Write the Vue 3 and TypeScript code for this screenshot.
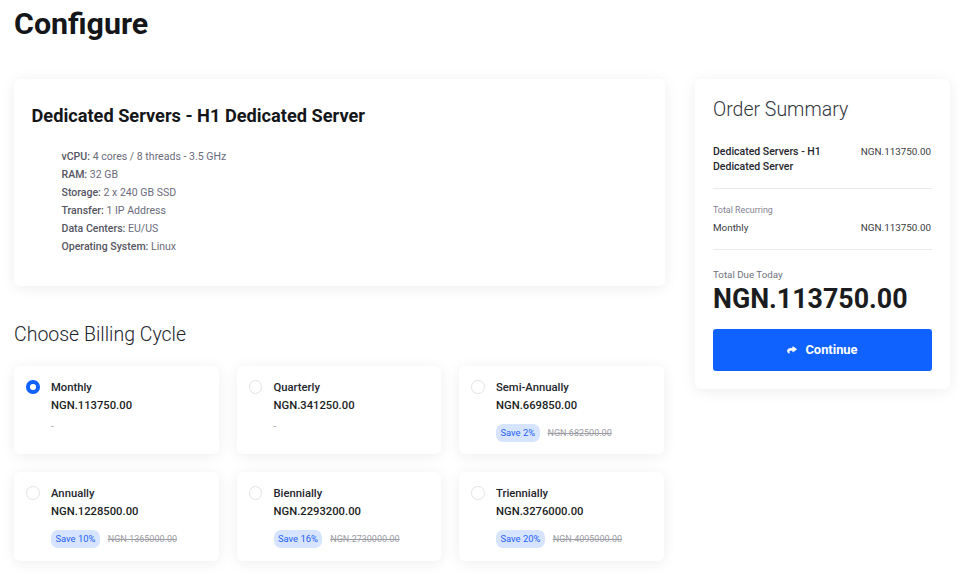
<script setup lang="ts">
import { ref } from 'vue';

interface Cycle {
  name: string;
  price: string;
  save?: string;
  was?: string;
}

const specs = [
  ['vCPU:', '4 cores / 8 threads - 3.5 GHz'],
  ['RAM:', '32 GB'],
  ['Storage:', '2 x 240 GB SSD'],
  ['Transfer:', '1 IP Address'],
  ['Data Centers:', 'EU/US'],
  ['Operating System:', 'Linux'],
];

const cycles: Cycle[] = [
  { name: 'Monthly', price: 'NGN.113750.00' },
  { name: 'Quarterly', price: 'NGN.341250.00' },
  { name: 'Semi-Annually', price: 'NGN.669850.00', save: 'Save 2%', was: 'NGN.682500.00' },
  { name: 'Annually', price: 'NGN.1228500.00', save: 'Save 10%', was: 'NGN.1365000.00' },
  { name: 'Biennially', price: 'NGN.2293200.00', save: 'Save 16%', was: 'NGN.2730000.00' },
  { name: 'Triennially', price: 'NGN.3276000.00', save: 'Save 20%', was: 'NGN.4095000.00' },
];

const selected = ref('Monthly');
</script>

<template>
  <div class="page">
    <h1 class="title">Configure</h1>
    <div class="layout">
      <main class="main">
        <section class="card product">
          <h2 class="product-name">Dedicated Servers - H1 Dedicated Server</h2>
          <ul class="specs">
            <li v-for="s in specs" :key="s[0]"><b>{{ s[0] }}</b> {{ s[1] }}</li>
          </ul>
        </section>

        <h3 class="section-title">Choose Billing Cycle</h3>
        <div class="cycles">
          <label v-for="c in cycles" :key="c.name" class="card cycle" @click="selected = c.name">
            <span class="radio" :class="{ checked: selected === c.name }"></span>
            <span class="cycle-body">
              <span class="cycle-name">{{ c.name }}</span>
              <span class="cycle-price">{{ c.price }}</span>
              <span v-if="c.save" class="cycle-save">
                <span class="badge">{{ c.save }}</span>
                <s class="was">{{ c.was }}</s>
              </span>
              <span v-else class="cycle-none">-</span>
            </span>
          </label>
        </div>
      </main>

      <aside class="card summary">
        <h3 class="summary-title">Order Summary</h3>
        <div class="line product-line">
          <span class="line-name">Dedicated Servers - H1 Dedicated Server</span>
          <span class="line-price">NGN.113750.00</span>
        </div>
        <div class="recurring">
          <div class="small">Total Recurring</div>
          <div class="line">
            <span class="line-cycle">Monthly</span>
            <span class="line-price">NGN.113750.00</span>
          </div>
        </div>
        <div class="due">
          <div class="due-label">Total Due Today</div>
          <div class="due-total">NGN.113750.00</div>
        </div>
        <button class="continue" type="button">
          <svg class="share" viewBox="-20 -20 552 552" preserveAspectRatio="none" aria-hidden="true">
            <path fill="currentColor" stroke="currentColor" stroke-width="36" d="M503.691 189.836L327.687 37.851C312.281 24.546 288 35.347 288 56.015v80.053C127.371 137.907 0 170.1 0 322.326c0 61.441 39.581 122.309 83.333 154.132 13.653 9.931 33.111-2.533 28.077-18.631C66.066 312.814 132.917 274.316 288 272.085V360c0 20.7 24.3 31.453 39.687 18.164l176.004-152c11.071-9.562 11.086-26.753 0-36.328z" />
          </svg>
          Continue
        </button>
      </aside>
    </div>
  </div>
</template>

<style scoped>
.page {
  height: 575px;
  overflow: hidden;
  box-sizing: border-box;
  padding: 0 13px 0 14px;
  font-family: Roboto, "Liberation Sans", sans-serif;
  color: #111;
}

.title {
  margin: 0;
  padding-top: 5px;
  font-size: 30.4px;
  line-height: 38px;
  font-weight: 700;
  color: #14161a;
}

.layout {
  display: flex;
  align-items: flex-start;
  gap: 30px;
  margin-top: 36px;
}

.main {
  width: 651px;
}

.card {
  background: #fff;
  border-radius: 6px;
  box-shadow: 0 2px 14px rgba(30, 40, 60, 0.08);
}

.product {
  height: 207px;
  box-sizing: border-box;
  padding: 25px 18px 0;
}

.product-name {
  margin: 0;
  margin-left: -0.5px;
  font-size: 18.2px;
  line-height: 23px;
  font-weight: 700;
  color: #14161a;
}

.specs {
  list-style: none;
  margin: 21px 0 0;
  padding: 0 0 0 29.5px;
  font-size: 10.55px;
  line-height: 18px;
  color: #6b6b7b;
}

.specs b {
  font-weight: 500;
  color: #55555f;
}

.section-title {
  margin: 36px 0 0;
  font-size: 19.5px;
  line-height: 25px;
  font-weight: 300;
  color: #22252b;
}

.cycles {
  display: grid;
  grid-template-columns: repeat(3, 204.5px);
  column-gap: 18px;
  row-gap: 18px;
  margin-top: 19px;
}

.cycle {
  display: flex;
  height: 88.33px;
  box-sizing: border-box;
  padding: 14px 12px 0;
  cursor: pointer;
}

.radio {
  flex: none;
  box-sizing: border-box;
  width: 13.5px;
  height: 13.5px;
  border: 1px solid #e2e3e6;
  border-radius: 50%;
  background: #fff;
}

.radio.checked {
  border: 4px solid #0f62fe;
}

.cycle-body {
  display: flex;
  flex-direction: column;
  margin: -1px 0 0 11.5px;
  min-width: 0;
}

.cycle-name {
  font-size: 11.25px;
  line-height: 18px;
  font-weight: 500;
  color: #24262d;
}

.cycle-price {
  font-size: 11.25px;
  line-height: 18px;
  font-weight: 500;
  color: #1b1d22;
}

.cycle-none {
  margin-top: 2px;
  font-size: 9.4px;
  line-height: 18px;
  color: #8d8d98;
}

.cycle-save {
  display: flex;
  align-items: center;
  gap: 8px;
  margin-top: 9px;
  white-space: nowrap;
}

.badge {
  height: 18px;
  padding: 0 4.5px;
  border-radius: 7px;
  background: #d6e4ff;
  color: #1f5ffa;
  font-size: 9.4px;
  line-height: 18px;
}

.was {
  font-size: 9px;
  line-height: 18px;
  color: #9c9ca4;
}

.summary {
  width: 255px;
  height: 310px;
  box-sizing: border-box;
  padding: 18px 18px 0;
}

.summary-title {
  margin: 0;
  font-size: 19.5px;
  line-height: 25px;
  font-weight: 300;
  color: #33363c;
}

.line {
  display: flex;
  justify-content: space-between;
  align-items: flex-start;
}

.product-line {
  margin-top: 22px;
  padding-bottom: 14px;
  border-bottom: 1px solid #e8e9ec;
}

.line-name {
  width: 120px;
  font-size: 10.5px;
  line-height: 15px;
  font-weight: 500;
  color: #24262d;
}

.line-price {
  margin-right: 1px;
  font-size: 9.85px;
  line-height: 15px;
  color: #3a3c42;
}

.recurring {
  margin-top: 14px;
  padding-bottom: 14px;
  border-bottom: 1px solid #e8e9ec;
}

.small {
  margin-bottom: 3px;
  font-size: 8.9px;
  line-height: 14px;
  color: #83838f;
}

.line-cycle {
  font-size: 9.85px;
  line-height: 15px;
  color: #3a3c42;
}

.due {
  margin-top: 18px;
}

.due-label {
  font-size: 9.75px;
  line-height: 14px;
  color: #6f6f7b;
}

.due-total {
  margin-top: 2px;
  font-size: 26.8px;
  line-height: 30px;
  font-weight: 700;
  color: #1a1c20;
}

.continue {
  display: flex;
  align-items: center;
  justify-content: center;
  gap: 8px;
  width: 219px;
  height: 42px;
  margin-top: 15px;
  padding: 0 0 2px;
  border: none;
  border-radius: 3px;
  background: #0f62fe;
  color: #fff;
  font-family: inherit;
  font-size: 12.9px;
  font-weight: 700;
  cursor: pointer;
}

.share {
  width: 10px;
  height: 8px;
  margin-top: 2px;
}
</style>

<style>
html,
body {
  margin: 0;
  background: #fff;
}
</style>
